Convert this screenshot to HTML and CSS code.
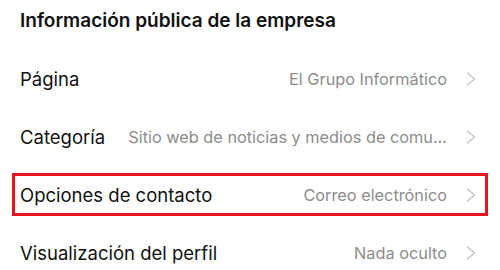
FILE: index.html
```html
<!DOCTYPE html>
<html lang="es">
<head>
    <meta charset="UTF-8">
    <meta name="viewport" content="width=device-width, initial-scale=1.0">
    <title>Información pública de la empresa</title>
    <link rel="stylesheet" href="styles.css">
</head>
<body>
    <header class="section-title">Información pública de la empresa</header>

    <main class="list">
        <div class="row">
            <div class="item">
                <span class="label">Página</span>
                <span class="value">El Grupo Informático</span>
                <svg class="chevron" viewBox="0 0 10 14"><path d="M1.5 1 L8.5 7 L1.5 13"/></svg>
            </div>
        </div>
        <div class="row">
            <div class="item">
                <span class="label">Categoría</span>
                <span class="value">Sitio web de noticias y medios de comu...</span>
                <svg class="chevron" viewBox="0 0 10 14"><path d="M1.5 1 L8.5 7 L1.5 13"/></svg>
            </div>
        </div>
        <div class="row">
            <div class="item highlight">
                <span class="label">Opciones de contacto</span>
                <span class="value">Correo electrónico</span>
                <svg class="chevron" viewBox="0 0 10 14"><path d="M1.5 1 L8.5 7 L1.5 13"/></svg>
            </div>
        </div>
        <div class="row">
            <div class="item">
                <span class="label">Visualización del perfil</span>
                <span class="value">Nada oculto</span>
                <svg class="chevron" viewBox="0 0 10 14"><path d="M1.5 1 L8.5 7 L1.5 13"/></svg>
            </div>
        </div>
    </main>
</body>
</html>
```

FILE: styles.css
```css
body {
    font-family: Inter, "Noto Sans", sans-serif;
    margin: 0;
    padding: 0;
    background-color: #ffffff;
    color: #111111;
    width: 500px;
    height: 270px;
    overflow: hidden;
}

.section-title {
    height: 51px;
    box-sizing: border-box;
    padding: 9px 0 0 20px;
    font-size: 19px;
    line-height: 24px;
    font-weight: 600;
}

.row {
    height: 58px;
    display: flex;
    align-items: center;
}

.item {
    flex: 1;
    height: 43px;
    margin: -3px 12px 0 12px;
    padding: 0 9px 0 5px;
    display: flex;
    align-items: center;
    border: 3px solid transparent;
    box-sizing: border-box;
}

.item.highlight {
    border-color: #e6141f;
}

.label {
    font-size: 18.5px;
    white-space: nowrap;
}

.value {
    flex: 1;
    margin-left: 14px;
    text-align: right;
    font-size: 16.3px;
    color: #8c8c8c;
    white-space: nowrap;
    overflow: hidden;
}

.chevron {
    width: 10px;
    height: 14px;
    margin-left: 19px;
    fill: none;
    stroke: #c2c2c2;
    stroke-width: 1.3;
    stroke-linecap: round;
    stroke-linejoin: round;
}
```
